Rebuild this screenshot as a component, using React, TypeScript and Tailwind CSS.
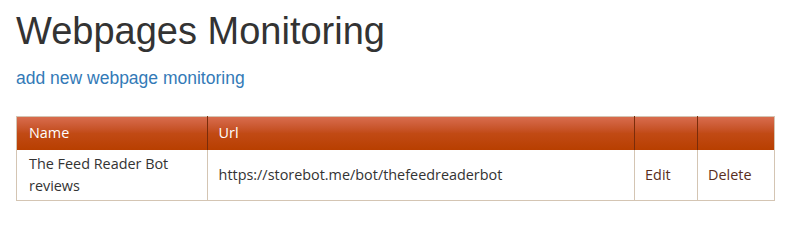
import React from 'react';

const rows = [
  { name: 'The Feed Reader Bot reviews', url: 'https://storebot.me/bot/thefeedreaderbot' },
];

export default function App() {
  return (
    <div className="w-[800px] h-[234px] bg-white px-4 pt-[10px]" style={{ fontFamily: '"Liberation Sans", Arial, sans-serif' }}>
      <h1 className="text-[38px] leading-[42px] text-[#333333] font-normal">Webpages Monitoring</h1>
      <a href="#" className="block mt-[16px] text-[17.5px] leading-[20px] text-[#337ab7]">
        add new webpage monitoring
      </a>

      <table
        className="mt-[28px] w-[759px] border-collapse border border-[#d4c5b3] text-[14.4px] text-[#333333]"
        style={{ fontFamily: '"Open Sans", "Noto Sans", sans-serif' }}
      >
        <thead>
          <tr className="h-[33px] bg-gradient-to-b from-[#d86c4d] via-[#c14a14] to-[#b83f00] text-white">
            <th className="w-[191px] px-3 text-left font-normal border-r border-[#7a2c0a]">Name</th>
            <th className="w-[428px] px-[11px] text-left font-normal border-r border-[#7a2c0a]">Url</th>
            <th className="w-[63px] border-r border-[#7a2c0a]"></th>
            <th className="w-[77px]"></th>
          </tr>
        </thead>
        <tbody>
          {rows.map((r) => (
            <tr key={r.url} className="h-[51px]">
              <td className="px-3 leading-[22px] border-r border-[#d4c5b3]">{r.name}</td>
              <td className="px-[11px] border-r border-[#d4c5b3]">{r.url}</td>
              <td className="px-[10px] border-r border-[#d4c5b3] text-[#5a2d1c]">Edit</td>
              <td className="px-[10px] text-[#5a2d1c]">Delete</td>
            </tr>
          ))}
        </tbody>
      </table>
    </div>
  );
}
